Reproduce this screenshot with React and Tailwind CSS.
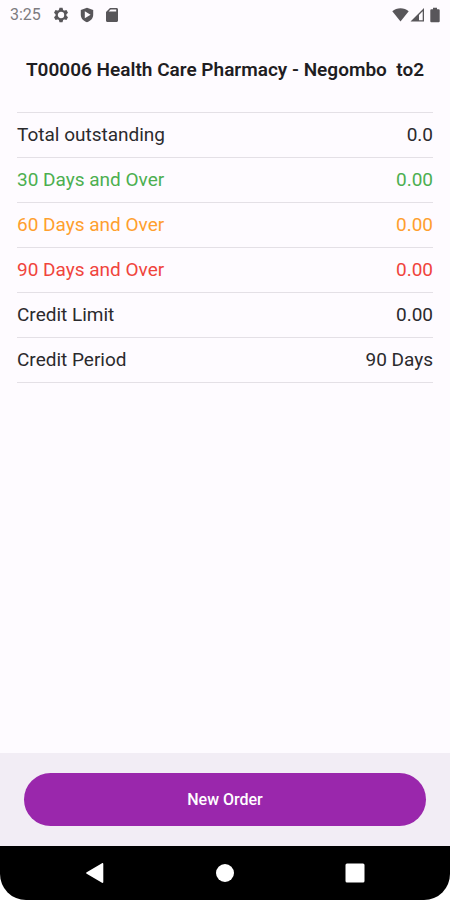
const balances = [
  { label: "Total outstanding", value: "0.0", color: "text-[#2b2a2d]" },
  { label: "30 Days and Over", value: "0.00", color: "text-[#4caf50]" },
  { label: "60 Days and Over", value: "0.00", color: "text-[#ff9f2e]" },
  { label: "90 Days and Over", value: "0.00", color: "text-[#f0443c]" },
  { label: "Credit Limit", value: "0.00", color: "text-[#2b2a2d]" },
  { label: "Credit Period", value: "90 Days", color: "text-[#2b2a2d]" },
];

const StatusBar = () => {
  return (
    <div className="flex h-[30px] items-center justify-between pl-[10px] pr-[6px] text-[#58565a]">
      <div className="flex items-center">
        <span className="w-[43px] text-base text-[#7d7b80]">3:25</span>
        <div className="flex items-center gap-[10px]">
          {/* Settings */}
          <svg width="16" height="16" viewBox="0 0 16 16" fill="currentColor">
            <circle
              cx="8"
              cy="8"
              r="4.3"
              fill="none"
              stroke="currentColor"
              strokeWidth="2.2"
            />
            {[0, 60, 120, 180, 240, 300].map((angle) => (
              <path
                key={angle}
                d="M6.500.8h3L10.300 3.600H5.700L6.500.8Z"
                transform={`rotate(${angle} 8 8)`}
              />
            ))}
          </svg>
          {/* Play protect */}
          <svg width="16" height="16" viewBox="0 0 16 16" fill="currentColor">
            <path
              fillRule="evenodd"
              d="M8 .7 14.2 3v4.8c0 3.6-2.7 6.4-6.2 7.5-3.5-1.1-6.2-3.9-6.2-7.5V3L8 .7ZM5.8 4.3v7L11.6 7.8 5.8 4.3Z"
            />
          </svg>
          {/* SD card */}
          <svg width="14" height="16" viewBox="0 0 14 16" fill="currentColor">
            <path
              fillRule="evenodd"
              d="M5 1h6.5c.9 0 1.5.6 1.5 1.5v11c0 .9-.6 1.5-1.5 1.5h-9C1.6 15 1 14.4 1 13.5V5l4-4Zm.6 1.6-2 2h7.6v-2H5.6Z"
            />
          </svg>
        </div>
      </div>
      <div className="flex items-center">
        {/* Wifi */}
        <svg width="18" height="16" viewBox="0 0 18 16" fill="currentColor">
          <path d="M8.500 14.500.3 4.200C2.500 2.300 5.400 1.300 8.500 1.300s6 1 8.200 2.900L8.500 14.500Z" />
        </svg>
        {/* Signal */}
        <svg width="16" height="16" viewBox="0 0 16 16" fill="currentColor">
          <path
            fillRule="evenodd"
            d="M14 1v13.500H.5L14 1Zm-1.300 3.300L9 8v5.200h3.700V4.300Z"
          />
        </svg>
        {/* Battery */}
        <svg width="18" height="16" viewBox="0 0 18 16" fill="currentColor">
          <path d="M7 .8h4v1.500h1.800c.5 0 .9.4.9.9v11.100c0 .5-.4.9-.9.9H5.200c-.5 0-.9-.4-.9-.9V3.200c0-.5.4-.9.9-.9H7V.8Z" />
        </svg>
      </div>
    </div>
  );
};

const NavBar = () => {
  return (
    <nav className="bg-white">
      <div className="flex h-[54px] items-center justify-between rounded-b-[26px] bg-black px-[85px] text-white">
        <button aria-label="Back">
          <svg width="20" height="22" viewBox="0 0 20 22" fill="currentColor">
            <path d="M17 1.200c.8-.4 1.300 0 1.300.8v18c0 .8-.5 1.200-1.300.8L1.700 11.800c-.7-.4-.7-1.200 0-1.600L17 1.200Z" />
          </svg>
        </button>
        <button aria-label="Home">
          <svg width="20" height="20" viewBox="0 0 20 20" fill="currentColor">
            <circle cx="10" cy="10" r="9" />
          </svg>
        </button>
        <button aria-label="Overview">
          <svg width="20" height="20" viewBox="0 0 20 20" fill="currentColor">
            <rect x="0.5" y="0.5" width="19" height="19" rx="1.5" />
          </svg>
        </button>
      </div>
    </nav>
  );
};

const App = () => {
  return (
    <div className="flex min-h-screen flex-col bg-[#fefbff] font-['Roboto',sans-serif]">
      <StatusBar />

      <h1 className="flex h-[82px] items-center justify-center whitespace-pre pb-0.5 text-[19px] font-semibold text-[#1f1d22]">
        T00006 Health Care Pharmacy - Negombo  to2
      </h1>

      <main className="flex-1 px-[17px]">
        <table className="w-full border-t border-[#e4e0e6]">
          <tbody>
            {balances.map((row) => (
              <tr
                key={row.label}
                className="h-[45px] border-b border-[#e4e0e6] text-[19px]"
              >
                <th
                  scope="row"
                  className={`text-left font-normal ${row.color}`}
                >
                  {row.label}
                </th>
                <td className={`text-right ${row.color}`}>{row.value}</td>
              </tr>
            ))}
          </tbody>
        </table>
      </main>

      <div className="bg-[#f2edf5] px-6 py-5">
        <button className="h-[53px] w-full rounded-full bg-[#9a27ac] text-base font-medium text-white">
          New Order
        </button>
      </div>

      <NavBar />
    </div>
  );
};

export default App;
